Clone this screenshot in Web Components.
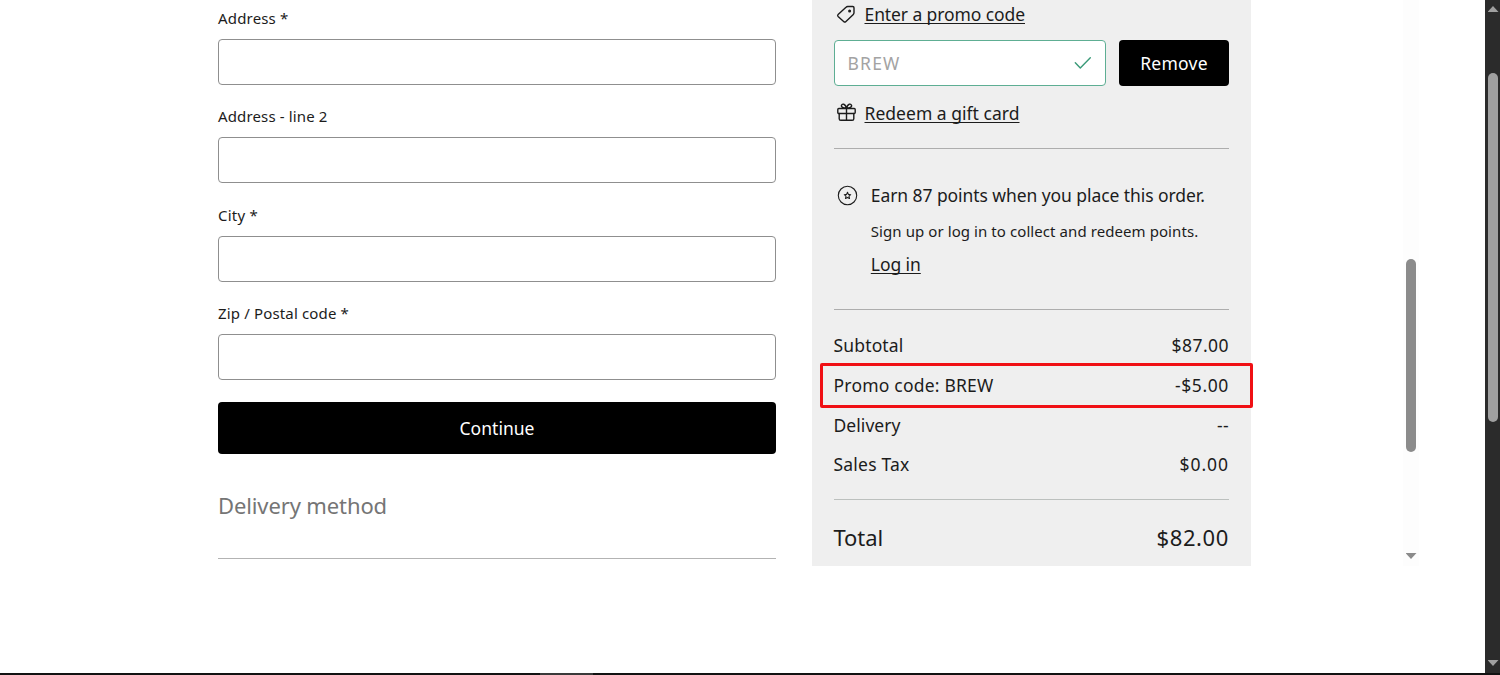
<!DOCTYPE html>
<html lang="en">
<head>
<meta charset="utf-8">
<title>Checkout</title>
<style>
    body {
        margin: 0;
        background: #fff;
        font-family: "Noto Sans", "Open Sans", sans-serif;
        font-size: 17.5px;
        color: #1c1c1c;
        overflow: hidden;
    }
</style>
</head>
<body>
<checkout-page></checkout-page>

<script>
function define(name, html, setup) {
    const template = document.createElement("template");
    template.innerHTML = html;

    customElements.define(name, class extends HTMLElement {
        constructor() {
            super();
            this.attachShadow({mode: "open"}).append(template.content.cloneNode(true));
        }

        connectedCallback() {
            if (setup) setup(this, this.shadowRoot);
        }
    });
}

// Spreads or tightens its letters so the text fills the given width
define("fit-text", /*html*/`
    <style>
        :host {
            display: inline-block;
            white-space: nowrap;
        }

        :host([underlined]) span {
            text-decoration: underline;
            text-decoration-thickness: 1px;
            text-underline-offset: 1.5px;
            text-decoration-skip-ink: none;
        }
    </style>
    <span><slot></slot></span>
`, (host, root) => {
    const width = Number(host.getAttribute("width"));
    const natural = root.querySelector("span").getBoundingClientRect().width;
    const spacing = (width - natural) / host.textContent.length;
    host.style.letterSpacing = spacing.toFixed(3) + "px";
    host.style.width = width + "px";
});

define("form-field", /*html*/`
    <style>
        :host {
            display: grid;
            gap: 11px;
        }

        label {
            font-size: 15px;
            line-height: 20px;
        }

        div {
            box-sizing: border-box;
            height: 46px;
            border: 1px solid #8f8f8f;
            border-radius: 4px;
            background: #fff;
        }
    </style>
    <label><slot></slot></label>
    <div></div>
`);

define("solid-button", /*html*/`
    <style>
        :host {
            display: flex;
            align-items: center;
            justify-content: center;
            background: #000;
            color: #fff;
            border-radius: 4px;
        }
    </style>
    <slot></slot>
`);

define("icon-link", /*html*/`
    <style>
        :host {
            display: flex;
            align-items: center;
            gap: 8.5px;
            height: 28px;
            line-height: 28px;
            padding-left: 2.5px;
        }
    </style>
    <slot name="icon"></slot>
    <a><slot></slot></a>
`);

define("price-row", /*html*/`
    <style>
        :host {
            display: flex;
            justify-content: space-between;
            align-items: center;
            position: relative;
            height: 39.7px;
        }

        :host([marked])::after {
            content: "";
            position: absolute;
            inset: -2px -24px -3.2px -13.3px;
            border: 3px solid #f01014;
            border-radius: 2px;
        }
    </style>
    <slot></slot>
    <slot name="price"></slot>
`);

define("scroll-bar", /*html*/`
    <style>
        :host {
            display: flex;
            flex-direction: column;
            align-items: center;
            box-sizing: border-box;
            background: var(--track);
        }

        .thumb {
            width: 10px;
            height: var(--length);
            margin-top: var(--start);
            border-radius: 5px;
            background: var(--thumb);
        }

        .arrow {
            width: 11px;
            height: 6px;
            background: var(--thumb);
            clip-path: polygon(0 100%, 50% 0, 100% 100%);
        }

        .down {
            margin-top: auto;
            transform: scaleY(-1);
        }

        :host([no-up]) .up {
            visibility: hidden;
        }
    </style>
    <div class="arrow up"></div>
    <div class="thumb"></div>
    <div class="arrow down"></div>
`);

define("address-form", /*html*/`
    <style>
        :host {
            display: flex;
            flex-direction: column;
            gap: 21.4px;
            box-sizing: border-box;
            width: 558px;
            padding-top: 8px;
        }

        solid-button {
            height: 52.8px;
        }

        h2 {
            margin: 14.6px 0 0;
            padding-bottom: 37.4px;
            border-bottom: 1px solid #b3b3b3;
            font-size: 22px;
            font-weight: 400;
            line-height: 30px;
            color: #757575;
        }
    </style>
    <form-field><fit-text width="70.5">Address *</fit-text></form-field>
    <form-field><fit-text width="109.5">Address - line 2</fit-text></form-field>
    <form-field><fit-text width="40">City *</fit-text></form-field>
    <form-field><fit-text width="131">Zip / Postal code *</fit-text></form-field>
    <solid-button><fit-text width="75">Continue</fit-text></solid-button>
    <h2><fit-text width="169">Delivery method</fit-text></h2>
`);

define("order-summary", /*html*/`
    <style>
        :host {
            display: block;
            box-sizing: border-box;
            width: 439.5px;
            height: 566px;
            padding: 0 22px;
            background: #efefef;
        }

        svg {
            display: block;
            fill: none;
            stroke: #1c1c1c;
            stroke-width: 1.4;
            stroke-linejoin: round;
            stroke-linecap: round;
        }

        .promo {
            display: flex;
            gap: 13px;
            height: 46px;
            margin: 12px 0 12.7px;
        }

        .code {
            flex: 1;
            display: flex;
            align-items: center;
            justify-content: space-between;
            box-sizing: border-box;
            padding: 0 13px;
            border: 1px solid #5eae93;
            border-radius: 4px;
            background: #fff;
            color: #a3a3a3;
        }

        .code svg {
            stroke: #3a9a78;
        }

        solid-button {
            width: 110px;
        }

        .points {
            display: flex;
            gap: 12.6px;
            margin-top: 21px;
            padding: 32px 0 31px 3.7px;
            border: solid #adadad;
            border-width: 1px 0;
            line-height: 28px;
        }

        .points svg {
            margin-top: 4.5px;
        }

        .points div {
            display: grid;
        }

        .points small {
            font-size: 15px;
            line-height: 24px;
            margin: 10.5px 0 7px;
        }

        .rows {
            padding: 15.1px 0 14.9px;
            border-bottom: 1px solid #bcc0be;
        }

        .total {
            display: flex;
            justify-content: space-between;
            margin-top: 22px;
            font-size: 22px;
            line-height: 30px;
        }
    </style>
    <icon-link>
        <svg slot="icon" width="20" height="20" viewBox="0 0 20 20">
            <path d="M2.1 10.6 10 3.2q.7-.7 1.7-.7h5q1.3 0 1.3 1.3v5q0 .9-.7 1.6l-7.6 7.3q-.9.8-1.8 0l-5.8-5.3q-.9-.9 0-1.8z"/>
            <circle cx="13.6" cy="7.1" r=".8" fill="#1c1c1c"/>
        </svg>
        <fit-text underlined width="160.5">Enter a promo code</fit-text>
    </icon-link>
    <div class="promo">
        <div class="code">
            <fit-text width="53">BREW</fit-text>
            <svg width="18" height="14" viewBox="0 0 18 14"><path d="M1.3 6.7l5 5.3L16.3 1.8"/></svg>
        </div>
        <solid-button><fit-text width="67.5">Remove</fit-text></solid-button>
    </div>
    <icon-link>
        <svg slot="icon" width="20" height="20" viewBox="0 0 20 20">
            <rect x="1.8" y="5.5" width="17.4" height="5" rx="1"/>
            <path d="M3.2 10.5v5.2q0 1.6 1.6 1.6h11.4q1.6 0 1.6-1.6v-5.2M10.5 5.5v11.8M10.5 5.3Q5 4.8 5.4 2.5C6 .1 9.5.7 10.5 5.3Q16 4.8 15.6 2.5C15 .1 11.5.7 10.5 5.3"/>
        </svg>
        <fit-text underlined width="155">Redeem a gift card</fit-text>
    </icon-link>
    <div class="points">
        <svg width="21" height="21" viewBox="0 0 21 21" style="stroke-width:1.1">
            <circle cx="10.5" cy="10.5" r="9.2"/>
            <path d="M10.5 7.3l.9 2.1 2.3.3-1.7 1.5.5 2.3-2-1.1-2 1.1.5-2.3-1.7-1.5 2.3-.3z"/>
        </svg>
        <div>
            <fit-text width="334">Earn 87 points when you place this order.</fit-text>
            <small><fit-text width="327.5">Sign up or log in to collect and redeem points.</fit-text></small>
            <a><fit-text underlined width="50">Log in</fit-text></a>
        </div>
    </div>
    <div class="rows">
        <price-row>
            <fit-text width="70">Subtotal</fit-text>
            <fit-text slot="price" width="57.5">$87.00</fit-text>
        </price-row>
        <price-row marked>
            <fit-text width="160">Promo code: BREW</fit-text>
            <fit-text slot="price" width="54">-$5.00</fit-text>
        </price-row>
        <price-row>
            <fit-text width="67">Delivery</fit-text>
            <fit-text slot="price" width="12">--</fit-text>
        </price-row>
        <price-row>
            <fit-text width="76">Sales Tax</fit-text>
            <fit-text slot="price" width="49.5">$0.00</fit-text>
        </price-row>
    </div>
    <div class="total">
        <fit-text width="49.5">Total</fit-text>
        <fit-text width="72.5">$82.00</fit-text>
    </div>
`);

define("checkout-page", /*html*/`
    <style>
        :host {
            display: grid;
            grid-template: 673px 2px / 1485px 15px;
        }

        main {
            display: flex;
            align-items: flex-start;
            padding-left: 218px;
        }

        order-summary {
            margin-left: 35.5px;
        }

        .inner {
            --track: #fdfdfd;
            --thumb: #8b8b8b;
            --start: 247px;
            --length: 193px;
            width: 16px;
            height: 566px;
            margin-left: 152px;
            padding: 6px 0 7px;
        }

        .outer {
            --track: #2b2b2b;
            --thumb: #a0a0a0;
            --start: 61px;
            --length: 349px;
            padding: 6px 0 7px 1px;
        }

        footer {
            grid-column: 1 / -1;
            display: flex;
            background: #121212;
        }

        footer::before {
            content: "";
            width: 53px;
            margin-left: 540px;
            background: #3a3a3a;
        }
    </style>
    <main>
        <address-form></address-form>
        <order-summary></order-summary>
        <scroll-bar class="inner" no-up></scroll-bar>
    </main>
    <scroll-bar class="outer"></scroll-bar>
    <footer></footer>
`);
</script>
</body>
</html>
